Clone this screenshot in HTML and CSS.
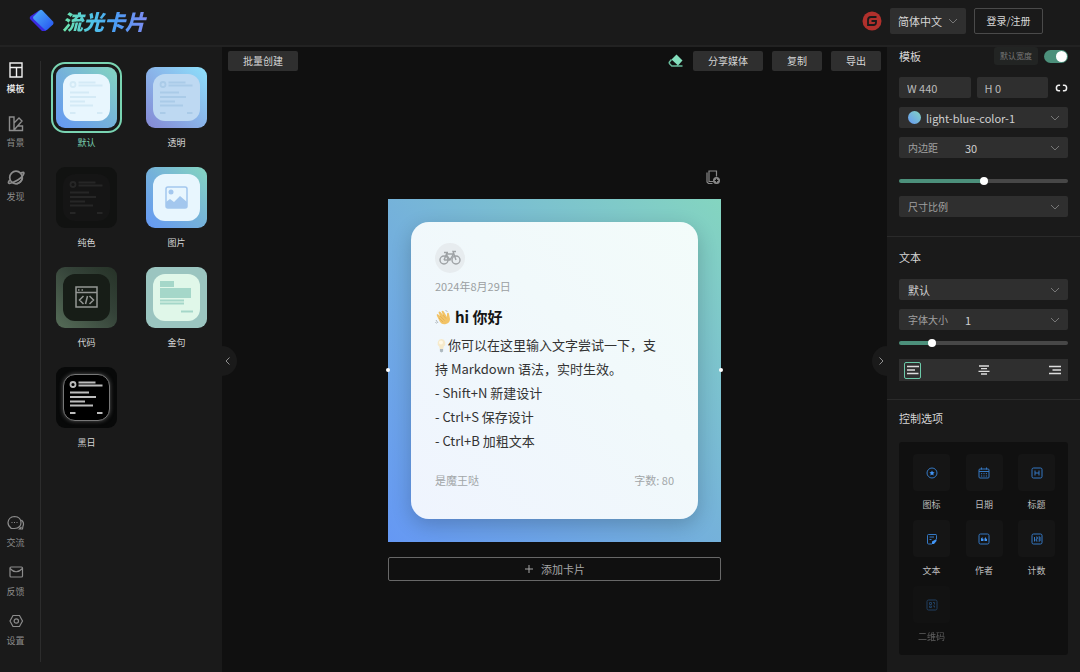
FILE: index.html
```
<!DOCTYPE html>
<html lang="zh-CN">
<head>
<meta charset="utf-8">
<meta name="viewport" content="width=device-width, initial-scale=1">
<title>流光卡片</title>
<link rel="stylesheet" href="styles.css">
</head>
<body>
<svg class="defs" aria-hidden="true">
  <symbol id="chevron" viewBox="0 0 10 10"><path d="M1 3l4 4 4-4" fill="none" stroke="currentColor"/></symbol>
  <symbol id="lines" viewBox="0 0 47 47">
    <g stroke="currentColor" fill="none" stroke-width="1.8">
      <circle cx="10" cy="10.500" r="2.500"/>
      <path d="M15.500 8.500h17M15.500 11.500h24M7 18.500h19M7 23h26M7 27.500h15M7 31.500h23M7 39h5.500M34 39h5.500"/>
    </g>
  </symbol>
</svg>
<div class="app">
  <header class="header">
    <a class="brand" href="#">
      <svg class="brand-mark" viewBox="0 0 26 24">
        <defs><linearGradient id="mark" x1="0" y1="0" x2="1" y2="1"><stop offset="0" stop-color="#4fb4fb"/><stop offset="1" stop-color="#2450f0"/></linearGradient></defs>
        <path d="M2.500 6.500L10 1.500 23.500 14.500 16.500 22H13L1 10q-1-2 1.500-3.500z" fill="#3a2be0"/>
        <path d="M4.500 7.500L10.500 1.500q1.500-1.300 3 0L24 12.500q1.300 1.500 0 3L18.500 20.500q-1.500 1.300-3 0L4.500 10q-1-1.300 0-2.500z" fill="url(#mark)"/>
      </svg>
      <span class="brand-name">流光卡片</span>
    </a>
    <div class="header-actions">
      <a class="gitee" href="#" aria-label="Gitee"><svg viewBox="0 0 20 20"><circle cx="10" cy="10" r="9.500" fill="#b0302c"/><path d="M14.500 6H9Q6 6 6 9v5h5.500q2.500 0 2.500-2.500V10H9.500" fill="none" stroke="#1a1a1a" stroke-width="1.800"/></svg></a>
      <span class="language"><select aria-label="语言"><option>简体中文</option></select><svg class="chevron"><use href="#chevron"/></svg></span>
      <button class="login">登录/注册</button>
    </div>
  </header>

  <div class="body">
    <nav class="rail">
      <div class="rail-group">
        <button class="rail-item active"><svg viewBox="0 0 18 18"><path d="M3 2h12v14H3zM3 6.500h12M9.500 6.500V16"/></svg>模板</button>
        <button class="rail-item"><svg viewBox="0 0 18 18"><path d="M2.500 2H7v13.500H2.500zM7 8l5-5 3 3-7.500 8.500M11 11h4.500v4.500H7"/></svg>背景</button>
        <button class="rail-item"><svg viewBox="0 0 18 18" class="bold"><circle cx="9" cy="8.500" r="6.300"/><path d="M13.500 4q4-1.500 3.300.500-1 3.500-6 6.500T2.300 14.500q-2-.500 .500-3.500M9.500 15q5-2 6-6"/></svg>发现</button>
      </div>
      <div class="rail-group minor">
        <button class="rail-item"><svg viewBox="0 0 18 18"><path d="M4 14q-3-2-3-5.500Q1.500 3 7.500 2.500 14 3 14 8.500T7.500 14.500H4zM14.500 6q3 3 1.500 6l-.500 3h-3l2-2M4.500 8.500h1M7 8.500h1M9.500 8.500h1"/></svg>交流</button>
        <button class="rail-item"><svg viewBox="0 0 18 18"><rect x="3" y="4" width="12.500" height="10" rx="1"/><path d="M3 5.500q6 6.500 12.500 0"/></svg>反馈</button>
        <button class="rail-item"><svg viewBox="0 0 18 18"><path d="M6 3.500h6.500L15.500 9l-3 5.500H6L3 9z"/><circle cx="9.300" cy="9" r="2.200"/></svg>设置</button>
      </div>
    </nav>

    <aside class="templates">
      <button class="template selected"><span class="thumb blue"><span class="sheet"><svg><use href="#lines"/></svg></span></span>默认</button>
      <button class="template"><span class="thumb glass"><span class="sheet"><svg><use href="#lines"/></svg></span></span>透明</button>
      <button class="template"><span class="thumb plain"><span class="sheet"><svg><use href="#lines"/></svg></span></span>纯色</button>
      <button class="template"><span class="thumb blue"><span class="sheet"><svg viewBox="0 0 47 47"><rect x="13" y="13" width="21" height="21" rx="2" fill="none" stroke="#a3c7ee" stroke-width="1.500"/><circle cx="18" cy="18" r="2.500" fill="#a3c7ee"/><path d="M13 28l4-3 4 3 6-6 7 6v6H13z" fill="#a3c7ee"/></svg></span></span>图片</button>
      <button class="template"><span class="thumb code"><span class="sheet"><svg viewBox="0 0 47 47" fill="none" stroke="#949694" stroke-width="1.500"><path d="M13 13h21v20H13zM13 18.500h21M15 16h1.500M18.500 16H20M20.500 22l-4 4 4 4M26.500 22l4 4-4 4M24.500 22l-2 8"/></svg></span></span>代码</button>
      <button class="template"><span class="thumb mint"><span class="sheet"><svg viewBox="0 0 47 47"><path d="M7 7h14v6H7zM7 14h31v10H7z" fill="#a5d7c9"/><path d="M7 26.500h24M7 29.500h24M28 37.500h12" stroke="#a5d7c9" stroke-width="1.800"/></svg></span></span>金句</button>
      <button class="template"><span class="thumb night"><span class="sheet"><svg><use href="#lines"/></svg></span></span>黑日</button>
    </aside>

    <main class="canvas">
      <button class="handle handle-left" aria-label="收起左栏"><svg viewBox="0 0 10 10"><path d="M6.500 1.500L3 5l3.500 3.500"/></svg></button>
      <button class="handle handle-right" aria-label="收起右栏"><svg viewBox="0 0 10 10"><path d="M3.500 1.500L7 5 3.500 8.500"/></svg></button>
      <div class="toolbar">
        <button class="tool">批量创建</button>
        <div class="toolbar-end">
          <button class="eraser" aria-label="清除"><svg viewBox="0 0 16 14"><path d="M8.500 0.500L14.500 6.500 10 11.500 3.500 5.500z" fill="#84dfbd"/><path d="M3.500 5.500L1.500 8q-.700 1 .300 2l2 2H14.500M10 11.500L8.500 12" fill="none" stroke="#68b99b" stroke-width="1.500"/></svg></button>
          <button class="tool">分享媒体</button>
          <button class="tool">复制</button>
          <button class="tool">导出</button>
        </div>
      </div>
      <div class="stage">
        <button class="duplicate" aria-label="复制卡片"><svg viewBox="0 0 16 16" fill="none" stroke="#898989" stroke-width="1.200"><path d="M11.500 7.500V2H4v10.500h4M2 3.500v9.500l1.500 1.500h4"/><circle cx="11.500" cy="11.500" r="2.900" fill="#898989"/><path d="M11.500 9.800v3.400M9.800 11.500h3.400" stroke="#101010"/></svg></button>
        <article class="card">
          <span class="grip grip-left"></span><span class="grip grip-right"></span>
          <div class="paper">
            <div class="avatar"><svg viewBox="0 0 22 16" fill="none" stroke="#9ea2a5" stroke-width="1.400"><circle cx="5" cy="10" r="4"/><circle cx="17" cy="10" r="4"/><path d="M5 10l2.500-6h7L11 10H5M7.500 5L11 10M17 10l-3-8.500h3M5 2.500h4"/></svg></div>
            <time class="date" datetime="2024-08-29">2024年8月29日</time>
            <h1 class="title"><svg class="wave" viewBox="0 0 16 16" role="img" aria-label="挥手"><path d="M2 7Q1 5.500 2.500 5L5 7 3.500 3.500Q4 2 5.500 3L8 6 6.500 2.500Q7.500 1 8.800 2.500L12 8V4.500q1.500-1.500 2 .500l1 5q0 4-4 5t-6-2z" fill="#f2c366"/><path d="M4 9l4 4M5 7l4.500 4.500M8 6l3 3.500" stroke="#dca64d" stroke-width=".6"/><path d="M1 11l2 3M10.500 1l2 2M.500 13l1 1.500" stroke="#a9b0b5" stroke-width=".9" fill="none"/></svg>hi 你好</h1>
            <p class="content"><svg class="bulb" viewBox="0 0 13 15" role="img" aria-label="灯泡"><path d="M6.500 1a4.200 4.200 0 0 0-2.300 7.500L4.700 11h3.600l.500-2.500A4.200 4.200 0 0 0 6.500 1z" fill="#f6eacb"/><circle cx="6" cy="4.500" r="2" fill="#fff9e8"/><path d="M4.900 11h3.200v2.500L6.500 14.500 4.900 13.500z" fill="#aeb9bf"/></svg>你可以在这里输入文字尝试一下，支<br>持 Markdown 语法，实时生效。<br>- Shift+N 新建设计<br>- Ctrl+S 保存设计<br>- Ctrl+B 加粗文本</p>
            <footer class="meta"><span>是魔王哒</span><span>字数: 80</span></footer>
          </div>
        </article>
        <button class="add"><svg viewBox="0 0 10 10"><path d="M5 1v8M1 5h8" stroke="currentColor"/></svg>添加卡片</button>
      </div>
    </main>

    <aside class="settings">
      <section class="section first">
        <div class="section-head">
          <h2>模板</h2>
          <label class="width-tag" for="default-width">默认宽度</label>
          <input class="switch" id="default-width" type="checkbox" checked>
        </div>
        <div class="size-row">
          <input class="size" aria-label="宽度" value="W 440">
          <input class="size" aria-label="高度" value="H 0">
          <button class="link" aria-label="锁定比例"><svg viewBox="0 0 14 8"><path d="M5.500 1H4Q1.500 1 1.500 4T4 7h1.500M8.500 1H10q2.500 0 2.500 3T10 7H8.500" fill="none" stroke="#f0f0f0" stroke-width="1.600"/></svg></button>
        </div>
        <div class="field"><span class="swatch"></span><select aria-label="配色"><option>light-blue-color-1</option></select><svg class="chevron"><use href="#chevron"/></svg></div>
        <div class="field"><label for="pad">内边距</label><select id="pad"><option>30</option></select><svg class="chevron"><use href="#chevron"/></svg></div>
        <input class="slider slider-pad" type="range" aria-label="内边距滑块" min="0" max="60" value="30" style="--fill: 50%">
        <div class="field muted"><select aria-label="尺寸比例"><option>尺寸比例</option></select><svg class="chevron"><use href="#chevron"/></svg></div>
      </section>
      <section class="section">
        <h2>文本</h2>
        <div class="field"><select aria-label="字体"><option>默认</option></select><svg class="chevron"><use href="#chevron"/></svg></div>
        <div class="field"><label for="font-size">字体大小</label><select id="font-size"><option>1</option></select><svg class="chevron"><use href="#chevron"/></svg></div>
        <input class="slider" type="range" aria-label="字体大小滑块" min="0" max="100" value="18" style="--fill: 18%">
        <div class="align">
          <button class="active" aria-label="左对齐"><svg viewBox="0 0 12 10"><path d="M0 1.500h12M0 5h8M0 8.500h11.500"/></svg></button>
          <button aria-label="居中"><svg viewBox="0 0 12 10"><path d="M1 1h10M3 3.700h6M.500 6.300h11M3 9h6"/></svg></button>
          <button aria-label="右对齐"><svg viewBox="0 0 12 10"><path d="M0 1.500h12M3.500 5H12M0 8.500h12"/></svg></button>
        </div>
      </section>
      <section class="section last">
        <h2>控制选项</h2>
        <div class="options">
          <button class="option"><span><svg viewBox="0 0 12 12"><circle cx="6" cy="6" r="5"/><path class="solid" d="M6 3.500l.8 1.600 1.800.3-1.300 1.200.3 1.800L6 7.600l-1.600.8.300-1.800-1.300-1.200 1.800-.3z"/></svg></span>图标</button>
          <button class="option"><span><svg viewBox="0 0 12 12"><rect x="1" y="2" width="10" height="9" rx="1"/><path d="M1 4.500h10M3.500.500v2M8.500.500v2M3 6.700h1.200M5.400 6.700h1.200M7.800 6.700H9M3 9h1.200M5.400 9h1.200M7.800 9H9"/></svg></span>日期</button>
          <button class="option"><span><svg viewBox="0 0 12 12"><rect x="1" y="1" width="10" height="10" rx="1.500"/><path d="M4 3.500v5M8 3.500v5M4 6h4"/></svg></span>标题</button>
          <button class="option"><span><svg viewBox="0 0 12 12"><path d="M6 11H2.500Q1.500 11 1.500 10V2.500q0-1 1-1h7.500q.500 0 .500 1V6M3.500 4h4.500M3.500 6.500h2"/><path class="solid" d="M6 11V8.500L10.500 6v2L8 11z"/></svg></span>文本</button>
          <button class="option"><span><svg viewBox="0 0 12 12"><rect x="1" y="1" width="10" height="10" rx="1.500"/><path class="solid" d="M3 8V5.500L4.500 4v1.700h1V8zM6.500 8V5.500L8 4v1.700h1V8z"/></svg></span>作者</button>
          <button class="option"><span><svg viewBox="0 0 12 12"><rect x="1" y="1" width="10" height="10" rx="1.500"/><path d="M3.500 4v4.500M5.200 4h1v2h-1v2h1.300M7.500 4H9v4H7.500M7.500 6H9"/></svg></span>计数</button>
          <button class="option disabled" disabled><span><svg viewBox="0 0 12 12"><rect x="1" y="1" width="10" height="10" rx="1.500"/><path d="M3.500 3.500h2v2h-2zM7 3.500h1.500v2M3.500 7h2v1.500h-2zM7 7h1.500v1.500"/></svg></span>二维码</button>
        </div>
      </section>
    </aside>
  </div>
</div>
</body>
</html>
```
FILE: styles.css
```
* { box-sizing: border-box; }

body {
  margin: 0;
  background: #1a1a1a;
  color: #d6d6d6;
  font-family: "Noto Sans CJK SC", sans-serif;
  font-size: 11px;
  line-height: 16px;
}

button, input, select { margin: 0; color: inherit; font: inherit; }
button { padding: 0; border: 0; background: none; cursor: pointer; }
svg { display: block; flex: none; }
h1, h2, p { margin: 0; }
.defs { position: absolute; width: 0; height: 0; }

.app { display: flex; flex-direction: column; height: 100vh; min-height: 660px; }

.header {
  display: flex;
  align-items: center;
  justify-content: space-between;
  height: 47px;
  padding: 0 37px 4px 29px;
  border-bottom: 2px solid #222;
}
.brand { display: flex; align-items: center; gap: 7px; text-decoration: none; }
.brand-mark { width: 26px; height: 24px; }
.brand-name {
  padding-right: 4px;
  background: linear-gradient(90deg, #6ee7a8, #4fc3e8 35%, #4b9df5 60%, #8289f0);
  background-clip: text;
  color: transparent;
  font-size: 21px;
  font-style: italic;
  font-weight: 900;
  line-height: 32px;
}
.header-actions { display: flex; align-items: center; gap: 8px; }
.gitee svg { width: 20px; height: 20px; }
.language { display: flex; align-items: center; width: 76px; height: 26px; padding: 0 8px; border-radius: 2px; background: #2f2f2f; }
.login { width: 69px; height: 26px; border: 1px solid #4a4a4a; border-radius: 2px; font-size: 10px; }

select { flex: 1; min-width: 0; padding: 0; border: 0; background: none; appearance: none; }
.chevron { width: 10px; height: 10px; color: #777; }

.body { display: flex; flex: 1; min-height: 0; }

.rail {
  display: flex;
  flex-direction: column;
  justify-content: space-between;
  width: 41px;
  margin: 14px 0 10px;
  padding-bottom: 13px;
  border-right: 1px solid #2c2c2c;
}
.rail-group { display: grid; gap: 18px; }
.rail-group.minor { gap: 12px; }
.rail-item { display: grid; justify-items: center; gap: 2px; width: 31px; color: #8c8c8c; font-size: 9px; }
.rail-item svg { width: 18px; height: 18px; fill: none; stroke: currentColor; stroke-width: 1.4; }
.rail-item .bold { stroke-width: 1.7; }
.rail-item.active { color: #f0f0f0; font-weight: 500; }
.minor .rail-item { gap: 3px; }
.minor svg { stroke-width: 1.2; }

.templates {
  display: grid;
  grid-template-columns: 71px 71px;
  align-content: start;
  gap: 10px 19px;
  width: 181px;
  padding: 15px 10px;
}
.template { display: grid; justify-items: center; gap: 1px; height: 90px; font-size: 9px; }
.thumb { display: grid; place-items: center; width: 61px; height: 61px; margin: 5px; border-radius: 9px; }
.sheet { width: 47px; height: 47px; border-radius: 12px; background: #e8f6fe; color: #d4eaf6; }
.sheet svg { width: 47px; height: 47px; }
.template.selected { color: #79ceb0; }
.selected .thumb { outline: 2px solid #79d4b2; outline-offset: 3px; }
.thumb.blue { background: linear-gradient(45deg, #6598f4, #75b2da 50%, #84d5c0); }
.thumb.glass { background: linear-gradient(45deg, #8588d4, #8ab4e9 50%, #8de0fb); }
.glass .sheet { background: #bed9f2; color: #aacbe8; }
.thumb.plain { background: #111211; }
.plain .sheet { background: #151515; color: #262626; }
.thumb.code { background: linear-gradient(45deg, #566c58, #344238 60%, #263227); }
.code .sheet { background: #171d17; }
.thumb.mint { background: #9bc5c0; }
.mint .sheet { background: #e0f7e9; }
.thumb.night { background: #080909; }
.night .sheet { border: 1px solid #777; background: #000; color: #bcbcbc; box-shadow: 0 0 4px #555; }
.night svg { margin: -1px; }

.canvas { position: relative; flex: 1; min-width: 0; background: #101010; }
.handle { position: absolute; top: 299px; width: 15px; height: 30px; background: #1a1a1a; }
.handle svg { width: 10px; height: 10px; margin-left: 1px; fill: none; stroke: #909090; }
.handle-left { left: 0; border-radius: 0 15px 15px 0; }
.handle-right { right: 0; border-radius: 15px 0 0 15px; }
.handle-right svg { margin-left: 4px; }

.toolbar { display: flex; justify-content: space-between; padding: 4px 6px 0; }
.toolbar-end { display: flex; gap: 9px; }
.tool { height: 20px; padding: 0 15px; border-radius: 2px; background: #2f2f2f; font-size: 10px; }
.eraser svg { width: 16px; height: 14px; }

.stage { display: flex; flex-direction: column; width: 333px; margin: 98px auto 0; }
.duplicate { align-self: flex-end; }
.duplicate svg { width: 16px; height: 16px; }
.card {
  position: relative;
  margin-top: 14px;
  padding: 23px;
  background: linear-gradient(45deg, #6598f4, #75b2da 50%, #84d5c0);
}
.grip { position: absolute; top: 169px; width: 4px; height: 4px; border-radius: 50%; background: #fff; }
.grip-left { left: -2px; }
.grip-right { right: -2px; }
.paper {
  padding: 21px 24px 31px;
  border-radius: 18px;
  background: linear-gradient(45deg, #eff4fe, #f1f9fb 60%, #f3fcfa);
  color: #333;
  box-shadow: 0 6px 20px rgb(0 0 0 / 20%);
}
.avatar { display: grid; place-items: center; width: 30px; height: 30px; border-radius: 50%; background: #e7ecef; }
.avatar svg { width: 22px; height: 16px; }
.date { display: block; margin-top: 5px; color: #9b9fa2; }
.title { display: flex; align-items: center; gap: 4px; margin-top: 11px; color: #151515; font-size: 15px; font-weight: 700; line-height: 24px; }
.wave { width: 16px; height: 16px; }
.content { margin-top: 4px; font-size: 13px; line-height: 24px; }
.bulb { display: inline-block; width: 13px; height: 15px; vertical-align: -3px; }
.meta { display: flex; justify-content: space-between; margin-top: 19px; color: #a2a6a8; }
.add {
  display: flex;
  align-items: center;
  justify-content: center;
  gap: 7px;
  height: 24px;
  margin-top: 15px;
  border: 1px solid #686868;
  border-radius: 2px;
  color: #a6a6a6;
}
.add svg { width: 10px; height: 10px; }

.settings { width: 193px; }
.section { padding: 12px 12px 0; border-top: 1px solid #2a2a2a; }
.section.first { padding-top: 0; border-top: 0; }
.section.last { padding-top: 10px; }
h2 { margin-bottom: 13px; font-size: 11px; font-weight: 400; line-height: 17px; }
.last h2 { margin-bottom: 15px; }
.section-head { display: flex; align-items: center; gap: 6px; height: 18px; }
.section-head h2 { flex: 1; margin: 0; }
.width-tag { padding: 0 6px; border-radius: 3px; background: #222423; color: #777; font-size: 8px; line-height: 18px; }
.switch { position: relative; width: 24px; height: 13px; border-radius: 7px; background: #4c907b; appearance: none; }
.switch::after { content: ""; position: absolute; top: 1px; right: 1px; width: 11px; height: 11px; border-radius: 50%; background: #fff; }
.size-row { display: flex; gap: 6px; margin: 12px 0 9px; }
.size { flex: 1; width: 0; height: 21px; padding: 0 8px; border: 0; border-radius: 2px; background: #2f2f2f; color: #bcbcbc; }
.link { margin-left: 1px; }
.link svg { width: 13px; height: 8px; }
.field { display: flex; align-items: center; height: 21px; margin-bottom: 9px; padding: 0 8px 0 9px; border-radius: 2px; background: #2f2f2f; color: #cfcfcf; }
.field label { width: 57px; color: #a0a0a0; font-size: 10px; }
.field.muted { margin-bottom: 19px; color: #a0a0a0; font-size: 10px; }
.swatch { width: 13px; height: 13px; margin-right: 5px; border-radius: 50%; background: linear-gradient(45deg, #6598f4, #84d5c0); }

.slider { display: block; width: 100%; height: 8px; margin: 0 0 12px; background: none; appearance: none; }
.slider-pad { margin: 19px 0 11px; }
.slider::-webkit-slider-runnable-track {
  height: 4px;
  border-radius: 2px;
  background: linear-gradient(90deg, #4c907b var(--fill), #474747 var(--fill));
}
.slider::-webkit-slider-thumb { width: 8px; height: 8px; margin-top: -2px; border-radius: 50%; background: #fff; appearance: none; }

.align { display: flex; align-items: center; justify-content: space-between; height: 22px; margin-bottom: 18px; padding: 0 5px; background: #2f2f2f; }
.align button { display: grid; place-items: center; width: 17px; height: 17px; border-radius: 2px; }
.align .active { border: 1px solid #6ccaa9; }
.align svg { width: 12px; height: 10px; fill: none; stroke: #ddd; stroke-width: 1.3; }

.options {
  display: grid;
  grid-template-columns: repeat(3, 37px);
  justify-content: space-between;
  gap: 7px 0;
  padding: 12px 13px 10px 14px;
  border-radius: 3px;
  background: #101010;
}
.option { display: grid; justify-items: center; gap: 6px; font-size: 9px; color: #bdbdbd; }
.option span { display: grid; place-items: center; width: 37px; height: 37px; border-radius: 4px; background: #151515; }
.option svg { width: 12px; height: 12px; fill: none; stroke: #3478c4; }
.option .solid { fill: #4295f5; stroke: none; }
.option.disabled { opacity: .45; }
```
